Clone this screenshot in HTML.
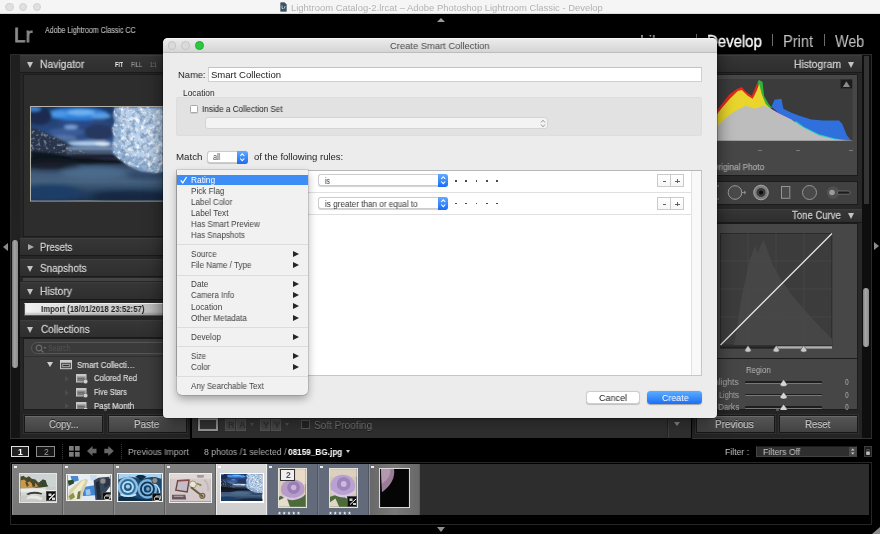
<!DOCTYPE html>
<html><head><meta charset="utf-8">
<title>Lightroom Classic - Develop</title>
<style>
*{box-sizing:border-box;margin:0;padding:0}
html,body{width:880px;height:534px;overflow:hidden;background:#000}
body{font-family:"Liberation Sans",sans-serif;position:relative;color:#ccc}
.abs{position:absolute}
.t{position:absolute;white-space:nowrap;line-height:1;will-change:transform}
#mac{position:absolute;left:0;top:0;width:880px;height:14px;background:#f5f5f5;border-bottom:1px solid #dcdcdc}
.tl{position:absolute;top:2.500px;width:8.500px;height:8.500px;border-radius:50%;background:#e0e0e0;border:0.500px solid #d2d2d2}
.ph{position:absolute;height:18px;background:linear-gradient(#363636,#2e2e2e);border-top:1px solid #3e3e3e;border-bottom:1px solid #1a1a1a}
.tri-d{position:absolute;width:0;height:0;border-left:3.500px solid transparent;border-right:3.500px solid transparent;border-top:6px solid #c4c4c4}
.tri-r{position:absolute;width:0;height:0;border-top:3.500px solid transparent;border-bottom:3.500px solid transparent;border-left:6px solid #a8a8a8}
.btn{position:absolute;height:18px;background:linear-gradient(#565656,#424242);border:1px solid #181818;box-shadow:inset 0 1px 0 #6a6a6a,0 0 0 1px #303030}
</style></head><body>
<div id="mac"><div class="tl" style="left:5.200px"></div><div class="tl" style="left:18.800px"></div><div class="tl" style="left:32.600px"></div>
<svg class="abs" style="left:280px;top:2px" width="7" height="10"><path d="M0.500 1 Q0.500 0.500 1 0.500 H4.500 L6.500 2.500 V9 Q6.500 9.500 6 9.500 H1 Q0.500 9.500 0.500 9Z" fill="#3e5062" stroke="#5a6c7e" stroke-width="0.500"/><path d="M2 3.500 V6.500 H3.500 M4.500 6.500 V4.800 Q5 4.500 5.500 4.700" stroke="#e4ecf2" stroke-width="0.700" fill="none"/></svg>
</div>
<div class="t" style="left:291.19px;top:3px;font-size:9.4px;color:#b2b2b2;transform:scaleX(1.0075);transform-origin:0 0;">Lightroom Catalog-2.lrcat – Adobe Photoshop Lightroom Classic - Develop</div>
<div class="abs" style="left:436.500px;top:17.500px;width:0;height:0;border-left:4px solid transparent;border-right:4px solid transparent;border-bottom:4px solid #9a9a9a"></div>
<div class="t" style="left:14.14px;top:24px;font-size:21px;color:#8c8c8c;transform:scaleX(0.9824);transform-origin:0 0;-webkit-text-stroke:0.800px #8c8c8c;">Lr</div>
<div class="t" style="left:44.90px;top:26px;font-size:8.6px;color:#b8b8b8;transform:scaleX(0.8209);transform-origin:0 0;-webkit-text-stroke:0.150px #b8b8b8;">Adobe Lightroom Classic CC</div>
<div class="t" style="left:639.71px;top:34px;font-size:15.6px;color:#c4c4c4;transform:scaleX(0.9851);transform-origin:0 0;">Library</div>
<div class="abs" style="left:695.500px;top:33.800px;width:1.400px;height:12.600px;background:#6c6c6c"></div>
<div class="t" style="left:706.74px;top:34px;font-size:15.6px;color:#fff;transform:scaleX(0.9589);transform-origin:0 0;-webkit-text-stroke:0.300px #fff;">Develop</div>
<div class="abs" style="left:771.800px;top:33.800px;width:1.400px;height:12.600px;background:#6c6c6c"></div>
<div class="t" style="left:783.16px;top:34px;font-size:15.6px;color:#c4c4c4;transform:scaleX(0.9387);transform-origin:0 0;">Print</div>
<div class="abs" style="left:823.500px;top:33.800px;width:1.400px;height:12.600px;background:#6c6c6c"></div>
<div class="t" style="left:835.30px;top:34px;font-size:15.6px;color:#c4c4c4;transform:scaleX(0.9194);transform-origin:0 0;">Web</div>
<div class="abs" style="left:10px;top:54px;width:10px;height:384px;background:linear-gradient(#1f1f1f 0,#222 185px,#141414 186px,#141414 100%);border-left:1px solid #2c2c2c;border-top:1px solid #2c2c2c"></div>
<div class="abs" style="left:12.300px;top:239.500px;width:6.200px;height:128.500px;background:linear-gradient(90deg,#777,#a4a4a4 40%,#8a8a8a);border-radius:3px"></div>
<div class="abs" style="left:2.500px;top:242.500px;width:0;height:0;border-top:4.500px solid transparent;border-bottom:4.500px solid transparent;border-right:5px solid #8c8c8c"></div>
<div class="abs" style="left:20px;top:54px;width:170px;height:384px;background:#262626;border-top:1px solid #2c2c2c"></div>
<div class="ph" style="left:20px;top:55px;width:168px"><div class="tri-d" style="left:7px;top:6px"></div></div><div class="t" style="left:39.54px;top:59px;font-size:10.8px;color:#cecece;transform:scaleX(0.9622);transform-origin:0 0;text-shadow:0 1px 0 rgba(0,0,0,.6);-webkit-text-stroke:0.300px #cecece;">Navigator</div>
<div class="t" style="left:114.70px;top:61px;font-size:7.4px;color:#f0f0f0;font-weight:bold;transform:scaleX(0.7364);transform-origin:0 0;">FIT</div>
<div class="t" style="left:130.50px;top:61px;font-size:7.4px;color:#8c8c8c;font-weight:bold;transform:scaleX(0.7133);transform-origin:0 0;">FILL</div>
<div class="t" style="left:149.70px;top:61px;font-size:7.4px;color:#686868;font-weight:bold;transform:scaleX(0.6273);transform-origin:0 0;">1:1</div>
<div class="abs" style="left:23px;top:74px;width:165px;height:163px;background:#2d2d2d;border:1px solid #1c1c1c"></div>
<svg class="abs" style="left:30px;top:106px" width="136" height="95.500" viewBox="0 0 136 95.500"><defs>
    <linearGradient id="sky" x1="0" y1="0" x2="0" y2="1"><stop offset="0" stop-color="#1c3763"/><stop offset="0.6" stop-color="#2d4f86"/><stop offset="1" stop-color="#41649a"/></linearGradient>
    <linearGradient id="wat" x1="0" y1="0" x2="0" y2="1"><stop offset="0" stop-color="#1b2436"/><stop offset="0.28" stop-color="#3e5878"/><stop offset="0.55" stop-color="#46627f"/><stop offset="0.8" stop-color="#27405e"/><stop offset="1" stop-color="#1a3050"/></linearGradient>
    <filter id="b1" x="-20%" y="-20%" width="140%" height="140%"><feGaussianBlur stdDeviation="1.600"/></filter>
    <filter id="b2" x="-20%" y="-20%" width="140%" height="140%"><feGaussianBlur stdDeviation="0.800"/></filter>
    <filter id="b3" x="-20%" y="-20%" width="140%" height="140%"><feGaussianBlur stdDeviation="2.600"/></filter>
    <filter id="fb"><feGaussianBlur stdDeviation="0.600"/></filter>
    <filter id="tex" x="0" y="0" width="100%" height="100%"><feTurbulence type="fractalNoise" baseFrequency="0.200" numOctaves="3" seed="7" result="n"/><feColorMatrix in="n" type="matrix" values="0 0 0 0 1  0 0 0 0 1  0 0 0 0 1  3.200 0 0 0 -1.550" result="w"/><feComposite in="w" in2="SourceGraphic" operator="in"/></filter>
    <filter id="texd" x="0" y="0" width="100%" height="100%"><feTurbulence type="fractalNoise" baseFrequency="0.220" numOctaves="3" seed="11" result="n"/><feColorMatrix in="n" type="matrix" values="0 0 0 0 0.16  0 0 0 0 0.26  0 0 0 0 0.42  0 3.400 0 0 -1.500" result="w"/><feComposite in="w" in2="SourceGraphic" operator="in"/></filter>
    <filter id="texh" x="0" y="0" width="100%" height="100%"><feTurbulence type="fractalNoise" baseFrequency="0.300" numOctaves="2" seed="5" result="n"/><feColorMatrix in="n" type="matrix" values="0 0 0 0 0.62  0 0 0 0 0.70  0 0 0 0 0.82  3 0 0 0 -1.550" result="w"/><feComposite in="w" in2="SourceGraphic" operator="in"/></filter>
    <clipPath id="navc"><rect x="1" y="1" width="134" height="93.500"/></clipPath>
  </defs><rect width="136" height="95.500" fill="#b4b2aa"/><g clip-path="url(#navc)"><g transform="translate(1,1)">
  <rect width="134" height="54" fill="url(#sky)"/>
  <g filter="url(#b1)">
    <ellipse cx="46" cy="7" rx="31" ry="6.500" fill="#2f80dc"/>
    <ellipse cx="50" cy="5.500" rx="14" ry="3" fill="#6fb2f0"/>
    <ellipse cx="28" cy="7" rx="9" ry="3" fill="#4d98e6"/>
    <ellipse cx="70" cy="9" rx="10" ry="3" fill="#5a9fe4"/>
    <ellipse cx="8" cy="9" rx="13" ry="9" fill="#1b2b4f"/>
    <ellipse cx="3" cy="2" rx="7" ry="2.500" fill="#3c7fd0"/>
    <ellipse cx="52" cy="17" rx="26" ry="4" fill="#2b4a86"/>
    <ellipse cx="68" cy="25" rx="15" ry="8" fill="#27375f"/>
    <ellipse cx="36" cy="25" rx="18" ry="4" fill="#3a5c98"/>
    <ellipse cx="40" cy="20" rx="7" ry="2" fill="#7aa4d8"/>
    <ellipse cx="58" cy="36.500" rx="22" ry="2.800" fill="#b4cdea"/>
    <ellipse cx="72" cy="37" rx="8" ry="2.500" fill="#e0ecf8"/>
    <ellipse cx="30" cy="31" rx="16" ry="3" fill="#5474a4"/>
  </g>
  <rect y="51" width="134" height="43" fill="url(#wat)"/>
  <g filter="url(#b2)">
    <path d="M0 20 L6 22 L16 27 L24 30 L32 34 L40 39 L46 42 L56 46 L70 49 L92 51 L92 55 L0 56Z" fill="#2a354b"/>
    <path d="M0 44 L20 46 L44 50 L70 52 L92 53 L92 56 L0 58Z" fill="#10151f"/>
    <path d="M36 40.500 H82 V42.500 H36Z" fill="#93a8c0"/>
    <path d="M36 42.500 H82 V47 H36Z" fill="#4c5c74" opacity="0.800"/>
    <path d="M40 47 L84 47 L90 51 L40 51Z" fill="#1a2231"/>
  </g>
  <path d="M0 20 L6 22 L16 27 L24 30 L32 34 L40 39 L46 42 L56 46 L56 48 L0 44Z" fill="#fff" filter="url(#texh)" opacity="0.550"/>
  <g filter="url(#b3)">
    <ellipse cx="20" cy="58" rx="30" ry="4.500" fill="#141a26"/>
    <ellipse cx="62" cy="66" rx="32" ry="6" fill="#4c6a8c"/>
    <ellipse cx="20" cy="86" rx="30" ry="8" fill="#1b3c66"/>
    <ellipse cx="100" cy="90" rx="40" ry="6" fill="#182840"/>
    <ellipse cx="116" cy="68" rx="20" ry="5" fill="#32486a"/>
  </g>
  <g filter="url(#b2)">
    <path d="M84 0 L82 8 L84 15 L81 22 L83 30 L81 38 L82 46 L88 52 L98 59 L110 64 L124 66 L134 64 V0Z" fill="#93b2d6"/>
    <path d="M90 2 L88 12 L92 22 L88 34 L96 46 L110 54 L134 56 V4Z" fill="#b9d0ea"/>
  </g>
  <path d="M84 0 L82 8 L84 15 L81 22 L83 30 L81 38 L82 46 L88 52 L98 59 L110 64 L124 66 L134 64 V0Z" fill="#fff" filter="url(#tex)"/>
  <path d="M84 0 L82 8 L84 15 L81 22 L83 30 L81 38 L82 46 L88 52 L98 59 L110 64 L124 66 L134 64 V0Z" fill="#fff" filter="url(#texd)" opacity="0.700"/>
  </g></g>
</svg>
<div class="ph" style="left:20px;top:238px;width:168px"><div class="tri-r" style="left:8px;top:5px"></div></div><div class="t" style="left:39.62px;top:242px;font-size:10.8px;color:#cecece;transform:scaleX(0.8800);transform-origin:0 0;text-shadow:0 1px 0 rgba(0,0,0,.6);-webkit-text-stroke:0.300px #cecece;">Presets</div>
<div class="ph" style="left:20px;top:259px;width:168px"><div class="tri-d" style="left:7px;top:6px"></div></div><div class="t" style="left:39.58px;top:263px;font-size:10.8px;color:#cecece;transform:scaleX(0.9160);transform-origin:0 0;text-shadow:0 1px 0 rgba(0,0,0,.6);-webkit-text-stroke:0.300px #cecece;">Snapshots</div>
<div class="abs" style="left:23px;top:277.500px;width:165px;height:3px;background:#444"></div>
<div class="ph" style="left:20px;top:282px;width:168px"><div class="tri-d" style="left:7px;top:6px"></div></div><div class="t" style="left:39.55px;top:286px;font-size:10.8px;color:#cecece;transform:scaleX(0.9485);transform-origin:0 0;text-shadow:0 1px 0 rgba(0,0,0,.6);-webkit-text-stroke:0.300px #cecece;">History</div>
<div class="abs" style="left:24px;top:302.500px;width:164px;height:13px;background:linear-gradient(90deg,#f2f2f2,#dcdcdc 25%,#c8c8c8 70%,#9a9a9a);border:1px solid #555;border-top-color:#eee;box-shadow:inset 0 -2px 2px rgba(0,0,0,.18)"></div>
<div class="t" style="left:41.30px;top:305px;font-size:8.6px;color:#222;font-weight:bold;transform:scaleX(0.9018);transform-origin:0 0;">Import (18/01/2018 23:52:57)</div>
<div class="ph" style="left:20px;top:320px;width:168px"><div class="tri-d" style="left:7px;top:6px"></div></div><div class="t" style="left:40.50px;top:324px;font-size:10.8px;color:#cecece;transform:scaleX(0.9208);transform-origin:0 0;text-shadow:0 1px 0 rgba(0,0,0,.6);-webkit-text-stroke:0.300px #cecece;">Collections</div>
<div class="abs" style="left:23px;top:337.500px;width:165px;height:72.500px;background:#3d3d3d;border:1px solid #1c1c1c"></div>
<div class="abs" style="left:31px;top:342px;width:152px;height:12px;border-radius:6px;background:#3a3a3a;border:1px solid #555"></div>
<svg class="abs" style="left:35px;top:343.500px" width="12" height="9"><circle cx="4" cy="4" r="2.800" fill="none" stroke="#6c6c6c" stroke-width="1.200"/><path d="M6 6 L8.500 8.500" stroke="#6c6c6c" stroke-width="1.200"/><path d="M8.500 3 L11.500 3 L10 5Z" fill="#6c6c6c"/></svg>
<div class="t" style="left:47.88px;top:344px;font-size:8.6px;color:#555;transform:scaleX(0.8192);transform-origin:0 0;">Search</div>
<div class="abs" style="left:24px;top:356px;width:163px;height:1px;background:#303030"></div>
<div class="tri-d" style="left:46.500px;top:361.500px;border-left-width:3px;border-right-width:3px;border-top-width:5.500px;border-top-color:#d0d0d0"></div>
<svg class="abs" style="left:59.500px;top:359.800px" width="13" height="10"><rect x="0.500" y="0.500" width="11" height="8.200" fill="#555" stroke="#c8c8c8"/><rect x="0.500" y="0.500" width="11" height="2.200" fill="#d0d0d0"/><rect x="2.800" y="4.500" width="6.400" height="2.200" fill="#2e2e2e" stroke="#d8d8d8" stroke-width="0.600"/></svg>
<div class="t" style="left:76.79px;top:361px;font-size:8.8px;color:#dcdcdc;transform:scaleX(0.9113);transform-origin:0 0;-webkit-text-stroke:0.200px #dcdcdc;">Smart Collecti…</div>
<svg class="abs" style="left:76px;top:373.5px" width="13" height="11"><rect x="0.500" y="0.500" width="9.500" height="7.500" fill="#8a8a8a" stroke="#c8c8c8"/><rect x="0.500" y="0.500" width="9.500" height="2" fill="#c8c8c8"/><path d="M2 4.500 H8 M2 6 H8" stroke="#555" stroke-width="0.600"/><circle cx="9.500" cy="7.500" r="2.300" fill="#d0d0d0" stroke="#444" stroke-width="0.500"/></svg>
<div class="t" style="left:94.30px;top:374px;font-size:8.8px;color:#dcdcdc;transform:scaleX(0.8714);transform-origin:0 0;-webkit-text-stroke:0.200px #dcdcdc;">Colored Red</div>
<div class="abs" style="left:65px;top:375.5px;width:0;height:0;border-top:3px solid transparent;border-bottom:3px solid transparent;border-left:4.500px solid #4c4c4c"></div>
<svg class="abs" style="left:76px;top:387.5px" width="13" height="11"><rect x="0.500" y="0.500" width="9.500" height="7.500" fill="#8a8a8a" stroke="#c8c8c8"/><rect x="0.500" y="0.500" width="9.500" height="2" fill="#c8c8c8"/><path d="M2 4.500 H8 M2 6 H8" stroke="#555" stroke-width="0.600"/><circle cx="9.500" cy="7.500" r="2.300" fill="#d0d0d0" stroke="#444" stroke-width="0.500"/></svg>
<div class="t" style="left:93.67px;top:388px;font-size:8.8px;color:#dcdcdc;transform:scaleX(0.8282);transform-origin:0 0;-webkit-text-stroke:0.200px #dcdcdc;">Five Stars</div>
<div class="abs" style="left:65px;top:389.5px;width:0;height:0;border-top:3px solid transparent;border-bottom:3px solid transparent;border-left:4.500px solid #4c4c4c"></div>
<svg class="abs" style="left:76px;top:401.5px" width="13" height="7.5"><rect x="0.500" y="0.500" width="9.500" height="7.500" fill="#8a8a8a" stroke="#c8c8c8"/><rect x="0.500" y="0.500" width="9.500" height="2" fill="#c8c8c8"/><path d="M2 4.500 H8 M2 6 H8" stroke="#555" stroke-width="0.600"/><circle cx="9.500" cy="7.500" r="2.300" fill="#d0d0d0" stroke="#444" stroke-width="0.500"/></svg>
<div class="t" style="left:93.60px;top:402px;font-size:8.8px;color:#dcdcdc;transform:scaleX(0.9047);transform-origin:0 0;height:8.200px;overflow:hidden;-webkit-text-stroke:0.200px #dcdcdc;">Past Month</div>
<div class="abs" style="left:65px;top:403px;width:0;height:0;border-top:3px solid transparent;border-bottom:3px solid transparent;border-left:4.500px solid #4c4c4c"></div>
<div class="abs" style="left:20px;top:410px;width:170px;height:28px;background:#242424"></div>
<div class="abs" style="left:10px;top:438px;width:180px;height:1px;background:#333"></div>
<div class="abs" style="left:104px;top:409px;width:3px;height:2px;background:#555"></div>
<div class="btn" style="left:24px;top:415px;width:79px"></div>
<div class="btn" style="left:107.500px;top:415px;width:79px"></div>
<div class="t" style="left:48.90px;top:418px;font-size:11.6px;color:#c6c6c6;transform:scaleX(0.8229);transform-origin:0 0;text-shadow:0 -1px 0 rgba(0,0,0,.7);-webkit-text-stroke:0.200px #c6c6c6;">Copy...</div>
<div class="t" style="left:134.05px;top:418px;font-size:11.6px;color:#c6c6c6;transform:scaleX(0.8500);transform-origin:0 0;text-shadow:0 -1px 0 rgba(0,0,0,.7);-webkit-text-stroke:0.200px #c6c6c6;">Paste</div>
<div class="abs" style="left:191.500px;top:410px;width:499px;height:28px;background:linear-gradient(#3c3c3c,#3a3a3a 40%,#2e2e2e);border-top:1px solid #454545"></div>
<div class="abs" style="left:198px;top:417.500px;width:19.500px;height:13.500px;border:2px solid #a4a4a4;background:#3a3a3a;box-shadow:0 0 0 0.500px #222"></div>
<div class="abs" style="left:224.5px;top:418.500px;width:10.500px;height:12px;background:#4e4e4e;border:0.500px solid #5a5a5a"></div>
<div class="t" style="left:227.60px;top:420px;font-size:9.4px;color:#363636;font-weight:bold;">R</div>
<div class="abs" style="left:235.5px;top:418.500px;width:10.500px;height:12px;background:#4e4e4e;border:0.500px solid #5a5a5a"></div>
<div class="t" style="left:238.60px;top:420px;font-size:9.4px;color:#363636;font-weight:bold;">A</div>
<div class="abs" style="left:259.8px;top:418.500px;width:10.500px;height:12px;background:#4e4e4e;border:0.500px solid #5a5a5a"></div>
<div class="t" style="left:262.90px;top:420px;font-size:9.4px;color:#363636;font-weight:bold;">Y</div>
<div class="abs" style="left:270.8px;top:418.500px;width:10.500px;height:12px;background:#4e4e4e;border:0.500px solid #5a5a5a"></div>
<div class="t" style="left:273.90px;top:420px;font-size:9.4px;color:#363636;font-weight:bold;">Y</div>
<div class="abs" style="left:250.2px;top:423px;width:0;height:0;border-left:2.500px solid transparent;border-right:2.500px solid transparent;border-top:3px solid #5c5c5c"></div>
<div class="abs" style="left:285.3px;top:423px;width:0;height:0;border-left:2.500px solid transparent;border-right:2.500px solid transparent;border-top:3px solid #5c5c5c"></div>
<div class="abs" style="left:301px;top:420.400px;width:8.500px;height:8.500px;border:1px solid #5c5c5c;background:#2a2a2a"></div>
<div class="t" style="left:314.19px;top:420px;font-size:11px;color:#858585;transform:scaleX(0.9129);transform-origin:0 0;text-shadow:0 1px 0 rgba(0,0,0,.5);">Soft Proofing</div>
<div class="abs" style="left:666.500px;top:411px;width:1px;height:27px;background:#262626"></div><div class="abs" style="left:667.500px;top:411px;width:1px;height:27px;background:#444"></div>
<div class="abs" style="left:673.500px;top:422px;width:0;height:0;border-left:3.500px solid transparent;border-right:3.500px solid transparent;border-top:4px solid #9a9a9a"></div>
<div class="abs" style="left:692px;top:54px;width:170px;height:384px;background:#282828;border-top:1px solid #2c2c2c"></div>
<div class="abs" style="left:861.500px;top:54px;width:10px;height:384px;background:#0e0e0e;border-right:1px solid #2c2c2c;border-top:1px solid #2c2c2c"></div>
<div class="abs" style="left:863.500px;top:56px;width:5.500px;height:147.500px;background:#343434"></div>
<div class="abs" style="left:863px;top:288px;width:5.800px;height:59px;background:linear-gradient(90deg,#7c7c7c,#a8a8a8 40%,#8c8c8c);border-radius:3px"></div>
<div class="abs" style="left:874px;top:242px;width:0;height:0;border-top:4.700px solid transparent;border-bottom:4.700px solid transparent;border-left:5px solid #8c8c8c"></div>
<div class="ph" style="left:692px;top:55px;width:169.500px;height:18px"><div class="tri-d" style="left:156px;top:6px"></div></div><div class="t" style="left:794.45px;top:59px;font-size:10.8px;color:#cecece;transform:scaleX(0.9542);transform-origin:0 0;text-shadow:0 1px 0 rgba(0,0,0,.6);-webkit-text-stroke:0.300px #cecece;">Histogram</div>
<div class="abs" style="left:693px;top:73.500px;width:165px;height:102px;background:#474747;border:1px solid #1c1c1c"></div>
<svg class="abs" style="left:716px;top:79px" width="136.500" height="62" viewBox="716 79 136.500 62">
  <rect x="716" y="79" width="136.500" height="62" fill="#3b3b3b"/>
  <path d="M716 111.700 L722 103.700 L729 94.800 L736.800 88.900 L741.800 86.900 L745 91 L751.700 95.800 L754.700 88.900 L758 81 L760 84 L762 96 L770 108 L716 130Z" fill="#dc2a20"/>
  <path d="M758 81 L759.200 80 L762.600 82 L764 95.800 L768.500 103.800 L772 108 L760 108Z" fill="#2eb43a"/>
  <path d="M716 115.700 L722 107.700 L729.900 98.800 L737.800 90.900 L741.800 89.900 L747.700 95.800 L752.700 98.800 L756.600 90.900 L759.200 83.900 L761.600 93.800 L765.600 103.800 L769.500 107.700 L780 116 L716 132Z" fill="#e9d52b"/>
  <path d="M770 106 L774 110.500 L782 114 L790 117 L796 120 L790 120 L776 113Z" fill="#d628c8"/>
  <path d="M771.500 106.700 L774.500 99.800 L781.400 98.800 L783.400 108.700 L791.400 112.700 L799.300 115.700 L811.200 119.600 L823.100 120.600 L839 120.600 L842 123.600 L847 135.500 L851 140.500 L835 139.500 L819 135.500 L803.300 127.600 L791.400 119.600 L780 114Z" fill="#3070dc"/>
  <path d="M796 121 L803.300 126.400 L819 134.300 L835 138.600 L848 140.200 L835 140 L819 136.300 L803.300 128.400 L795 122.500Z" fill="#24d0cc"/>
  <path d="M716 127.600 L724 119.600 L733.800 111.700 L745.700 105.700 L754.700 108.700 L763.600 105.700 L769.500 107.700 L777.500 112.700 L791.400 119.600 L803.300 127.600 L819 135.500 L835 139.500 L851 141 L716 141Z" fill="#bdbdbd"/>
  <rect x="716" y="140.400" width="136.500" height="0.600" fill="#8a8a8a"/>
  <rect x="840.600" y="79.600" width="11.500" height="8.800" fill="#1c1c1c"/><path d="M842.800 87 L846.400 81.200 L850 87Z" fill="#8c8c8c"/>
</svg>
<div class="t" style="left:711.70px;top:163px;font-size:8.6px;color:#a4a4a4;transform:scaleX(0.9574);transform-origin:0 0;-webkit-text-stroke:0.250px #a4a4a4;">Original Photo</div>
<div class="abs" style="left:758px;top:149.500px;width:4px;height:1px;background:#7a7a7a"></div>
<div class="abs" style="left:795.5px;top:149.500px;width:4px;height:1px;background:#7a7a7a"></div>
<div class="abs" style="left:848.5px;top:149.500px;width:4px;height:1px;background:#7a7a7a"></div>
<div class="abs" style="left:693px;top:180.500px;width:165px;height:24px;background:#414141;border:1px solid #1c1c1c"></div>
<svg class="abs" style="left:716px;top:181px" width="140" height="23" viewBox="0 0 140 23">
  <path d="M3 5 H0.500 V18 H3" fill="none" stroke="#9a9a9a"/>
  <circle cx="19" cy="11.500" r="6.800" fill="#4a4a4a" stroke="#9a9a9a" stroke-width="1"/><path d="M25.800 11.500 L29.500 11.500 M28 10 L30 11.500 L28 13" stroke="#9a9a9a" fill="none" stroke-width="0.800"/>
  <circle cx="45" cy="11.500" r="7.300" fill="#7c7c7c" stroke="#a8a8a8"/><circle cx="45" cy="11.500" r="4.500" fill="#3a3a3a"/><circle cx="45" cy="11.500" r="2" fill="#0c0c0c"/>
  <rect x="65.500" y="5.500" width="8.300" height="11.800" fill="#4a4a4a" stroke="#959595"/>
  <circle cx="93.500" cy="11.500" r="7" fill="#4a4a4a" stroke="#959595"/>
  <circle cx="117" cy="11.500" r="6.300" fill="#505050"/><circle cx="116" cy="11.500" r="2.800" fill="#9a9a9a"/><rect x="121.500" y="10" width="12.500" height="3.200" rx="1" fill="#1c1c1c" stroke="#767676" stroke-width="0.800"/>
</svg>
<div class="ph" style="left:692px;top:209px;width:169.500px;height:13.5px"><div class="tri-d" style="left:156px;top:2.8px"></div></div><div class="t" style="left:791.70px;top:210px;font-size:10.8px;color:#cecece;transform:scaleX(0.8836);transform-origin:0 0;text-shadow:0 1px 0 rgba(0,0,0,.6);-webkit-text-stroke:0.300px #cecece;">Tone Curve</div>
<div class="abs" style="left:693px;top:223px;width:165px;height:136px;background:#474747;border:1px solid #1c1c1c"></div>
<svg class="abs" style="left:720px;top:233px" width="113" height="121" viewBox="0 0 113 121">
  <rect x="0.500" y="0.500" width="111.300" height="111.700" fill="#3c3c3c" stroke="#2a2a2a"/>
  <path d="M14 112 L22 62 L30 26 L35 13 L38 20 L40 14 L43.700 6.800 L47 16 L52 30 L58.600 43 L71.700 62 L92.600 86 L112 106 V112Z" fill="#464646"/>
  <path d="M56 0 V112 M28 0 V112 M84 0 V112 M0 56 H112 M0 28 H112 M0 84 H112" stroke="#4a4a4a" stroke-width="0.600"/>
  <path d="M0.500 112 L112 0.500" stroke="#e6e6e6" stroke-width="1.300"/>
  <rect x="0" y="113.300" width="56" height="2.300" fill="#222"/><rect x="56" y="113.300" width="56" height="2.300" fill="#b0b0b0"/>
  <g fill="#c8c8c8" stroke="#3a3a3a" stroke-width="0.500"><path d="M24.800 117 L28 112.500 L31.200 117 A3.200 2.200 0 0 1 24.800 117Z"/><path d="M53 117 L56.200 112.500 L59.400 117 A3.200 2.200 0 0 1 53 117Z"/><path d="M80.500 117 L83.700 112.500 L86.900 117 A3.200 2.200 0 0 1 80.500 117Z"/></g>
</svg>
<div class="abs" style="left:693px;top:358px;width:165px;height:52px;background:#464646;border:1px solid #1c1c1c"></div>
<div class="t" style="left:745.60px;top:366px;font-size:8.6px;color:#b8b8b8;transform:scaleX(0.9038);transform-origin:0 0;">Region</div>
<div class="t" style="left:700.81px;top:378px;font-size:8.6px;color:#a8a8a8;transform:scaleX(0.9946);transform-origin:0 0;">Highlights</div>
<div class="t" style="left:719.05px;top:391px;font-size:8.6px;color:#a8a8a8;transform:scaleX(0.8500);transform-origin:0 0;">Lights</div>
<div class="t" style="left:717.86px;top:403px;font-size:8.6px;color:#a8a8a8;transform:scaleX(0.9429);transform-origin:0 0;height:7.500px;overflow:hidden;">Darks</div>
<div class="abs" style="left:744.800px;top:381px;width:77.500px;height:2.800px;background:#1e1e1e;border-bottom:1px solid #787878;border-radius:1px"></div>
<div class="abs" style="left:744.800px;top:393.5px;width:77.500px;height:2.800px;background:#1e1e1e;border-bottom:1px solid #787878;border-radius:1px"></div>
<div class="abs" style="left:744.800px;top:406px;width:77.500px;height:2.800px;background:#1e1e1e;border-bottom:1px solid #787878;border-radius:1px"></div>
<svg class="abs" style="left:779.200px;top:377.500px" width="10" height="32"><g fill="#d4d4d4" stroke="#2a2a2a" stroke-width="0.500"><path d="M1 6.300 L4.600 1.500 L8.200 6.300 A3.600 2.300 0 0 1 1 6.300Z"/><path d="M1 18.800 L4.600 14 L8.200 18.800 A3.600 2.300 0 0 1 1 18.800Z"/><path d="M1 31 L4.600 26.200 L8.200 31 A3.600 2.300 0 0 1 1 31Z"/></g></svg>
<div class="t" style="left:845.20px;top:378px;font-size:8.6px;color:#a8a8a8;transform:scaleX(0.7800);transform-origin:0 0;">0</div>
<div class="t" style="left:845.20px;top:391px;font-size:8.6px;color:#a8a8a8;transform:scaleX(0.7800);transform-origin:0 0;">0</div>
<div class="t" style="left:845.20px;top:403px;font-size:8.6px;color:#a8a8a8;transform:scaleX(0.7800);transform-origin:0 0;height:7.500px;overflow:hidden;">0</div>
<div class="abs" style="left:692px;top:410px;width:170px;height:28px;background:#242424"></div>
<div class="abs" style="left:692px;top:438px;width:180px;height:1px;background:#333"></div>
<div class="abs" style="left:775.500px;top:409px;width:3px;height:2px;background:#555"></div>
<div class="btn" style="left:695.500px;top:415px;width:79px"></div>
<div class="btn" style="left:779px;top:415px;width:78.500px"></div>
<div class="t" style="left:714.84px;top:418px;font-size:11.6px;color:#c6c6c6;transform:scaleX(0.8591);transform-origin:0 0;text-shadow:0 -1px 0 rgba(0,0,0,.7);-webkit-text-stroke:0.200px #c6c6c6;">Previous</div>
<div class="t" style="left:805.36px;top:418px;font-size:11.6px;color:#c6c6c6;transform:scaleX(0.8379);transform-origin:0 0;text-shadow:0 -1px 0 rgba(0,0,0,.7);-webkit-text-stroke:0.200px #c6c6c6;">Reset</div>
<div class="abs" style="left:10.500px;top:445.500px;width:18.500px;height:11.500px;border:1.500px solid #e0e0e0;background:#222"></div>
<div class="t" style="left:18.10px;top:448px;font-size:8.6px;color:#fff;font-weight:bold;">1</div>
<div class="abs" style="left:36px;top:445.500px;width:18.500px;height:11.500px;border:1.500px solid #8c8c8c;background:#161616"></div>
<div class="t" style="left:43.50px;top:448px;font-size:8.6px;color:#9a9a9a;">2</div>
<div class="abs" style="left:61.500px;top:444px;width:0;height:15px;border-left:1px dotted #3a3a3a"></div>
<svg class="abs" style="left:68.800px;top:445.500px" width="11" height="11"><g fill="#7c7c7c"><rect width="4.700" height="4.700"/><rect x="6" width="4.700" height="4.700"/><rect y="6" width="4.700" height="4.700"/><rect x="6" y="6" width="4.700" height="4.700"/></g></svg>
<svg class="abs" style="left:86.500px;top:446px" width="28" height="11"><g fill="#666"><path d="M0 5 L5.500 0 V2.800 H9.500 V7.200 H5.500 V10Z"/><path d="M26.800 5 L21.300 0 V2.800 H17.300 V7.200 H21.300 V10Z"/></g></svg>
<div class="abs" style="left:120.500px;top:444px;width:0;height:15px;border-left:1px dotted #3a3a3a"></div>
<div class="t" style="left:127.71px;top:448px;font-size:8.8px;color:#b0b0b0;transform:scaleX(0.9852);transform-origin:0 0;">Previous Import</div>
<div class="t" style="left:204.00px;top:448px;font-size:8.8px;color:#b0b0b0;transform:scaleX(0.9857);transform-origin:0 0;">8 photos /1 selected /</div>
<div class="t" style="left:287.70px;top:448px;font-size:8.8px;color:#fff;font-weight:bold;transform:scaleX(0.9328);transform-origin:0 0;">08159_BG.jpg</div>
<div class="abs" style="left:346px;top:450px;width:0;height:0;border-left:2.500px solid transparent;border-right:2.500px solid transparent;border-top:3px solid #ccc"></div>
<div class="t" style="left:725.42px;top:448px;font-size:8.8px;color:#c4c4c4;transform:scaleX(0.9826);transform-origin:0 0;">Filter :</div>
<div class="abs" style="left:756px;top:445.500px;width:101px;height:11px;background:#2e2e2e;border:1px solid #444;border-top-color:#1c1c1c"></div>
<div class="t" style="left:763.22px;top:448px;font-size:8.8px;color:#c8c8c8;transform:scaleX(0.9811);transform-origin:0 0;">Filters Off</div>
<svg class="abs" style="left:848.500px;top:446.500px" width="7.500" height="9"><rect width="7.500" height="9" fill="#4a4a4a"/><path d="M2 3.500 L3.750 1.500 L5.500 3.500Z M2 5.500 L3.750 7.500 L5.500 5.500Z" fill="#d0d0d0"/></svg>
<svg class="abs" style="left:863.500px;top:445.500px" width="8" height="11"><rect x="0.500" y="0.500" width="7" height="10" fill="#1e1e1e" stroke="#3c3c3c"/><rect x="2.200" y="5.500" width="3.600" height="3.400" fill="#c0c0c0"/><path d="M2.800 5.500 V3.500 H5.200 V5.500" fill="none" stroke="#6c6c6c" stroke-width="0.700"/></svg>
<style>
.cell{position:absolute;top:463.500px;height:51px;width:50px;background:linear-gradient(#808080,#767676);border-left:1px solid #8e8e8e;border-right:1px solid #5c5c5c}
.flag{position:absolute;left:0.500px;top:2.200px;width:3.200px;height:2.200px;background:#ececec}
.th{position:absolute;border:1px solid #e6e2d8;overflow:hidden}
.bdg{position:absolute;width:9.500px;height:9.500px;background:#0c0c0c;border:0.500px solid #4c4c4c}
.stars{position:absolute;top:509.800px;font-size:5.200px;color:#f0f0f0;letter-spacing:2.500px;line-height:5px}
</style>
<div class="abs" style="left:10px;top:461.500px;width:861.500px;height:63px;border:1px solid #262626"></div>
<div class="abs" style="left:12px;top:463.500px;width:857px;height:51px;background:#2d2d2d"></div>
<div class="cell" style="left:12px;width:51px"><div class="flag"></div></div>
<div class="cell" style="left:63px;width:51px"><div class="flag"></div></div>
<div class="cell" style="left:114px;width:51px"><div class="flag"></div></div>
<div class="cell" style="left:165px;width:51px"><div class="flag"></div></div>
<div class="cell" style="left:216px;width:51px;background:linear-gradient(#d8d8d8,#cecece);border-color:#ececec"><div class="flag" style="background:#fff"></div></div>
<div class="cell" style="left:267px;width:51px;background:#636b7b;border-left-color:#737b8b;border-right-color:#4e5666"><div class="flag"></div></div>
<div class="cell" style="left:318px;width:51px;background:#636b7b;border-left-color:#737b8b;border-right-color:#4e5666"><div class="flag"></div></div>
<div class="cell" style="left:369px;width:51px;background:linear-gradient(90deg,#686868,#7a7a7a 50%,#686868)"><div class="flag"></div></div>

<svg class="th" style="left:18.800px;top:473px;border-color:#e4e4e0" width="38.500" height="30" viewBox="0 0 38 30">
<rect width="38" height="30" fill="#d4d6d2"/><rect width="38" height="14" fill="#cdd3d3"/><g filter="url(#fb)">
<path d="M0 3 L3 2 L6 4 L9 2.500 L12 5 L16 6 L19 9 L22 8 L24 6 L27 7 L28 11 L30 13 L22 14.500 L0 15.500Z" fill="#4a4a2c"/>
<path d="M0 7 L4 6 L7 9 L10 8 L13 11 L16 10 L19 13 L14 15 L0 15.500Z" fill="#c8984e"/>
<path d="M5 9 L7 8 L9 12 L7 14Z" fill="#5a4a28"/><path d="M12 9 L15 9 L16 13 L13 14Z" fill="#4a4226"/>
<path d="M21 8 L24 6 L27 7 L28 11 L29 13 L22 14Z" fill="#36442e"/>
<path d="M0 15.500 H38 V19.500 H0Z" fill="#eaeae6"/>
<path d="M27 14 H38 V17 H27Z" fill="#c4cccc"/>
<path d="M6 21.500 Q13 17 23 20.500 Q24 21.500 22 22 Q14 20 8 22.500Z" fill="#3a3c38"/>
<path d="M0 23 H38 V30 H0Z" fill="#c9c9c6"/><path d="M8 24 Q16 21 24 26 L22 28 Q14 25 6 27Z" fill="#e6e6e4"/></g></svg>
<div class="bdg" style="left:46.300px;top:491.400px"><svg width="9.500" height="9.500" style="position:absolute;left:0;top:0"><path d="M2 7.500 L7.500 2" stroke="#fff" stroke-width="1.100"/><rect x="1.500" y="1.500" width="3" height="2.500" fill="#d8d8d8"/><rect x="5" y="5.500" width="3" height="2.500" fill="#d8d8d8"/></svg></div>
<svg class="th" style="left:65.800px;top:474.200px;border-color:#f0f0ec" width="46" height="27" viewBox="0 0 46 27">
<rect width="46" height="27" fill="#e8eef6"/><g filter="url(#fb)">
<path d="M3 1 L11 1 L12 6 L5 8Z" fill="#4a8ad2"/><path d="M24 0 L32 0 L30 5 L25 6Z" fill="#c8dcf0"/>
<path d="M17 13 L29 11 L30 25 L16 25Z" fill="#3f86d4"/><path d="M19 16 L24 15 L25 21 L20 22Z" fill="#9cc4ec"/><path d="M13 23 L30 22 L30 27 L13 27Z" fill="#dfe9f5"/>
<path d="M0 6 L6 5 L7 9 L1 12Z" fill="#2e4a2c"/>
<path d="M0 25 L2 16 L14 6 L20 4 L22 6 L14 26 L0 27Z" fill="#d9d2a8"/><path d="M4 20 L16 6 L19 6 L9 26 L4 26Z" fill="#f0ecd2"/><path d="M1 23 L6 19 L8 24 L3 27Z" fill="#8a9450"/><path d="M11 18 L14 17 L13 26 L10 26Z" fill="#6a7a4a"/>
<path d="M28 6 L33 3 L45 2 L46 12 L40 20 L38 27 L30 27Z" fill="#39475a"/><path d="M30 8 L34 6 L36 26 L32 26Z" fill="#1e2a3a"/><path d="M38 4 L46 4 L46 10 L40 14Z" fill="#2a3646"/></g>
<circle cx="38" cy="6.500" r="3.200" fill="#8e8e8e" stroke="#4a4a4a" stroke-width="0.700"/></svg>
<div class="bdg" style="left:102.200px;top:491.600px;width:8.500px;height:8.500px"><svg width="9" height="9" style="position:absolute;left:0;top:0"><rect x="1.500" y="3" width="5" height="3.500" rx="1.200" fill="none" stroke="#e4e4e4" stroke-width="0.900"/><path d="M3 3 V2 H7.300 V5" stroke="#e4e4e4" stroke-width="0.800" fill="none"/></svg></div>
<svg class="th" style="left:116.800px;top:473px;border-color:#eef4f8" width="46" height="29" viewBox="0 0 46 29">
<rect width="46" height="29" fill="#1a4a72"/><g filter="url(#fb)">
<path d="M0 0 H46 V5 Q34 1 24 6 Q12 0 0 6Z" fill="#a8d2ee"/>
<path d="M18 3 L24 7 L30 3 L26 1 L21 1Z" fill="#0c2c48"/>
<circle cx="10" cy="14" r="11" fill="#8fc2e6"/><circle cx="10" cy="14" r="8.500" fill="#2f6c9c"/><circle cx="10" cy="14" r="6.500" fill="#b6dcf4"/><circle cx="10" cy="14" r="4.200" fill="#22587f"/><circle cx="10" cy="13.500" r="2.300" fill="#a4d0ee"/>
<circle cx="31" cy="16" r="10.500" fill="#7fb4dc"/><circle cx="31" cy="16" r="8" fill="#0f3656"/><circle cx="31" cy="16" r="6" fill="#8cc0e6"/><circle cx="31" cy="16" r="4" fill="#153f62"/><circle cx="31.500" cy="16" r="2" fill="#6fa8d4"/>
<path d="M0 25 Q10 22 20 26 Q30 29 46 24 V29 H0Z" fill="#0d2d49"/><path d="M2 22 Q10 26 19 22" stroke="#cde6f8" stroke-width="1.600" fill="none"/><path d="M38 10 Q45 14 44 22" stroke="#bfe0f6" stroke-width="1.500" fill="none"/></g>
<circle cx="39" cy="7" r="3.300" fill="#8e8e8e" stroke="#2a2a2a" stroke-width="0.800"/></svg>
<div class="bdg" style="left:152.300px;top:492.500px;width:9px;height:8.500px"><svg width="9" height="9" style="position:absolute;left:0;top:0"><rect x="1.500" y="3" width="5" height="3.500" rx="1.200" fill="none" stroke="#e4e4e4" stroke-width="0.900"/><path d="M3 3 V2 H7.300 V5" stroke="#e4e4e4" stroke-width="0.800" fill="none"/></svg></div>
<svg class="th" style="left:169.200px;top:473px;border-color:#f0ecea" width="43" height="29.500" viewBox="0 0 43 29">
<rect width="43" height="29" fill="#d4cacc"/><g filter="url(#fb)">
<path d="M0 0 H43 V5 H0Z" fill="#dfd8d6"/><path d="M28 1 L36 1 L35 4 L29 4Z" fill="#a89a94"/>
<path d="M8 7 L20 6.500 L18 19 L6 17Z" fill="#c4bcc8" stroke="#6a4a44" stroke-width="1.500"/>
<path d="M8 7 L20 6.500" stroke="#8a4a4a" stroke-width="1.600"/>
<circle cx="24" cy="11" r="3.600" fill="#ece6d2" stroke="#8a8260" stroke-width="0.800"/>
<path d="M22 14 L35 24" stroke="#6a5a3c" stroke-width="2.200"/><path d="M28 10 L33 12" stroke="#8a8a3c" stroke-width="1.800"/>
<circle cx="34" cy="23" r="2.600" fill="none" stroke="#7a6a44" stroke-width="1.400"/>
<path d="M2 22 L16 22 L17 27 L2 27Z" fill="#6a5660"/><path d="M4 23.500 H14" stroke="#d4cacc" stroke-width="0.800"/>
<path d="M36 6 Q41 10 40 18" stroke="#c4b8b4" stroke-width="2" fill="none"/></g></svg>
<div class="abs" style="left:219.500px;top:472.500px;width:44.500px;height:30px;background:#fff"></div>
<svg class="abs" style="left:221px;top:474px" width="41.500" height="27" viewBox="1 1 134 93.500" preserveAspectRatio="none"><g clip-path="url(#navc)"><g transform="translate(1,1)">
  <rect width="134" height="54" fill="url(#sky)"/>
  <g filter="url(#b1)">
    <ellipse cx="46" cy="7" rx="31" ry="6.500" fill="#2f80dc"/>
    <ellipse cx="50" cy="5.500" rx="14" ry="3" fill="#6fb2f0"/>
    <ellipse cx="28" cy="7" rx="9" ry="3" fill="#4d98e6"/>
    <ellipse cx="70" cy="9" rx="10" ry="3" fill="#5a9fe4"/>
    <ellipse cx="8" cy="9" rx="13" ry="9" fill="#1b2b4f"/>
    <ellipse cx="3" cy="2" rx="7" ry="2.500" fill="#3c7fd0"/>
    <ellipse cx="52" cy="17" rx="26" ry="4" fill="#2b4a86"/>
    <ellipse cx="68" cy="25" rx="15" ry="8" fill="#27375f"/>
    <ellipse cx="36" cy="25" rx="18" ry="4" fill="#3a5c98"/>
    <ellipse cx="40" cy="20" rx="7" ry="2" fill="#7aa4d8"/>
    <ellipse cx="58" cy="36.500" rx="22" ry="2.800" fill="#b4cdea"/>
    <ellipse cx="72" cy="37" rx="8" ry="2.500" fill="#e0ecf8"/>
    <ellipse cx="30" cy="31" rx="16" ry="3" fill="#5474a4"/>
  </g>
  <rect y="51" width="134" height="43" fill="url(#wat)"/>
  <g filter="url(#b2)">
    <path d="M0 20 L6 22 L16 27 L24 30 L32 34 L40 39 L46 42 L56 46 L70 49 L92 51 L92 55 L0 56Z" fill="#2a354b"/>
    <path d="M0 44 L20 46 L44 50 L70 52 L92 53 L92 56 L0 58Z" fill="#10151f"/>
    <path d="M36 40.500 H82 V42.500 H36Z" fill="#93a8c0"/>
    <path d="M36 42.500 H82 V47 H36Z" fill="#4c5c74" opacity="0.800"/>
    <path d="M40 47 L84 47 L90 51 L40 51Z" fill="#1a2231"/>
  </g>
  <path d="M0 20 L6 22 L16 27 L24 30 L32 34 L40 39 L46 42 L56 46 L56 48 L0 44Z" fill="#fff" filter="url(#texh)" opacity="0.550"/>
  <g filter="url(#b3)">
    <ellipse cx="20" cy="58" rx="30" ry="4.500" fill="#141a26"/>
    <ellipse cx="62" cy="66" rx="32" ry="6" fill="#4c6a8c"/>
    <ellipse cx="20" cy="86" rx="30" ry="8" fill="#1b3c66"/>
    <ellipse cx="100" cy="90" rx="40" ry="6" fill="#182840"/>
    <ellipse cx="116" cy="68" rx="20" ry="5" fill="#32486a"/>
  </g>
  <g filter="url(#b2)">
    <path d="M84 0 L82 8 L84 15 L81 22 L83 30 L81 38 L82 46 L88 52 L98 59 L110 64 L124 66 L134 64 V0Z" fill="#93b2d6"/>
    <path d="M90 2 L88 12 L92 22 L88 34 L96 46 L110 54 L134 56 V4Z" fill="#b9d0ea"/>
  </g>
  <path d="M84 0 L82 8 L84 15 L81 22 L83 30 L81 38 L82 46 L88 52 L98 59 L110 64 L124 66 L134 64 V0Z" fill="#fff" filter="url(#tex)"/>
  <path d="M84 0 L82 8 L84 15 L81 22 L83 30 L81 38 L82 46 L88 52 L98 59 L110 64 L124 66 L134 64 V0Z" fill="#fff" filter="url(#texd)" opacity="0.700"/>
  </g></g>
</svg>

<svg class="th" style="left:278px;top:467.500px" width="28.500" height="40" viewBox="0 0 29 41">
<rect width="29" height="41" fill="#d9ccb8"/><g filter="url(#fb)"><rect x="18" width="11" height="16" fill="#e8dcc8"/><path d="M0 30 L10 26 L18 32 L29 28 V41 H0Z" fill="#4d6a3a"/><ellipse cx="15" cy="22" rx="13" ry="11" fill="#b79cc8"/><circle cx="16" cy="20" r="7" fill="#9a7eb4"/><circle cx="16" cy="20" r="3" fill="#c9b4d8"/><path d="M3 28 Q14 37 27 28" stroke="#d6c4e0" stroke-width="2.500" fill="none"/><path d="M0 34 L8 30 L12 41 H0Z" fill="#e4dccc"/></g></svg>
<div class="abs" style="left:279.500px;top:469px;width:15.500px;height:12px;background:#f0f0f0;border:1px solid #333"></div>
<div class="t" style="left:285.70px;top:471px;font-size:8.6px;color:#555;font-weight:bold;">2</div>

<svg class="abs" style="left:277.7px;top:510.500px" width="24" height="4"><path d="M1.5 0.200 L1.95 1.500 L3.1 1.500 L2.2 2.300 L2.55 3.700 L1.5 2.900 L0.45 3.700 L0.8 2.300 L-0.1 1.500 L1.05 1.500Z" fill="#f0f0f0"/><path d="M6.25 0.200 L6.7 1.500 L7.85 1.500 L6.95 2.300 L7.3 3.700 L6.25 2.900 L5.2 3.700 L5.55 2.300 L4.65 1.500 L5.8 1.500Z" fill="#f0f0f0"/><path d="M11 0.200 L11.45 1.500 L12.6 1.500 L11.7 2.300 L12.05 3.700 L11 2.900 L9.95 3.700 L10.3 2.300 L9.4 1.500 L10.55 1.500Z" fill="#f0f0f0"/><path d="M15.75 0.200 L16.2 1.500 L17.35 1.500 L16.45 2.300 L16.8 3.700 L15.75 2.900 L14.7 3.700 L15.05 2.300 L14.15 1.500 L15.3 1.500Z" fill="#f0f0f0"/><path d="M20.5 0.200 L20.95 1.500 L22.1 1.500 L21.2 2.300 L21.55 3.700 L20.5 2.900 L19.45 3.700 L19.8 2.300 L18.9 1.500 L20.05 1.500Z" fill="#f0f0f0"/></svg>

<svg class="th" style="left:329px;top:467.500px" width="28.500" height="40" viewBox="0 0 29 41">
<rect width="29" height="41" fill="#d4c8b4"/><g filter="url(#fb)"><rect x="0" width="29" height="8" fill="#dcd0c0"/><path d="M0 30 L10 27 L18 32 L29 29 V41 H0Z" fill="#4d6a3a"/><ellipse cx="14" cy="18" rx="13.500" ry="12" fill="#b9a2d0"/><circle cx="15" cy="16" r="7.500" fill="#9c84bc"/><circle cx="15" cy="16" r="3.200" fill="#cdbadc"/><path d="M1 24 Q14 35 28 24" stroke="#d9c9e4" stroke-width="2.500" fill="none"/><path d="M0 36 L6 32 L10 41 H0Z" fill="#e0d6c6"/></g></svg>
<div class="bdg" style="left:346.500px;top:496px;width:10.500px;height:10.500px"><svg width="10" height="10" style="position:absolute;left:0;top:0"><path d="M2 7.500 L8 2" stroke="#fff" stroke-width="1"/><rect x="1.500" y="1.500" width="3" height="2.500" fill="#ccc"/><rect x="5" y="6" width="3" height="2" fill="#ccc"/></svg></div>

<svg class="abs" style="left:328.5px;top:510.500px" width="24" height="4"><path d="M1.5 0.200 L1.95 1.500 L3.1 1.500 L2.2 2.300 L2.55 3.700 L1.5 2.900 L0.45 3.700 L0.8 2.300 L-0.1 1.500 L1.05 1.500Z" fill="#f0f0f0"/><path d="M6.25 0.200 L6.7 1.500 L7.85 1.500 L6.95 2.300 L7.3 3.700 L6.25 2.900 L5.2 3.700 L5.55 2.300 L4.65 1.500 L5.8 1.500Z" fill="#f0f0f0"/><path d="M11 0.200 L11.45 1.500 L12.6 1.500 L11.7 2.300 L12.05 3.700 L11 2.900 L9.95 3.700 L10.3 2.300 L9.4 1.500 L10.55 1.500Z" fill="#f0f0f0"/><path d="M15.75 0.200 L16.2 1.500 L17.35 1.500 L16.45 2.300 L16.8 3.700 L15.75 2.900 L14.7 3.700 L15.05 2.300 L14.15 1.500 L15.3 1.500Z" fill="#f0f0f0"/><path d="M20.5 0.200 L20.95 1.500 L22.1 1.500 L21.2 2.300 L21.55 3.700 L20.5 2.900 L19.45 3.700 L19.8 2.300 L18.9 1.500 L20.05 1.500Z" fill="#f0f0f0"/></svg>

<svg class="th" style="left:379px;top:467.500px;border-color:#d8d8d8" width="31" height="40" viewBox="0 0 31 41">
<rect width="31" height="41" fill="#050505"/><g filter="url(#fb)"><path d="M1 0 H15 Q17 14 2 25 Q1 10 1 0Z" fill="#9a7c98"/><path d="M1 0 H11 Q12 9 2 16Z" fill="#b498b0"/></g></svg>
<div class="abs" style="left:436.500px;top:527px;width:0;height:0;border-left:4.500px solid transparent;border-right:4.500px solid transparent;border-top:5px solid #8e8e8e"></div>
<div class="abs" style="left:872px;top:527px;width:0;height:0;border-left:8px solid transparent;border-bottom:7px solid #8a8a8a"></div>
<style>
.pop{position:absolute;background:#fff;border:0.500px solid #cdcdcd;border-radius:3px;box-shadow:0 0.500px 0.800px rgba(0,0,0,.18)}
.st{position:absolute;width:10.500px;border-radius:0 3px 3px 0;background:linear-gradient(#62aaff,#1a6cf4)}
.ma{position:absolute;left:293px;width:0;height:0;border-top:3.700px solid transparent;border-bottom:3.700px solid transparent;border-left:6.600px solid #262626}
.ms{position:absolute;left:177px;width:131px;height:1px;background:#dcdcdc}
.pm{position:absolute;width:14px;height:13px;background:linear-gradient(#fff,#f6f6f6);border:1px solid #cacaca}
</style>
<div class="abs" style="left:163px;top:38px;width:553.500px;height:379.500px;background:#ececec;border-radius:5px 5px 4px 4px;box-shadow:0 6px 18px rgba(0,0,0,.55),0 0 0 0.500px rgba(0,0,0,.5)"></div>
<div class="abs" style="left:163px;top:38px;width:553.500px;height:15px;background:linear-gradient(#ebebeb,#d5d5d5);border-radius:5px 5px 0 0;border-bottom:1px solid #bdbdbd;border-top:1px solid #f6f6f6"></div>
<div class="abs" style="left:167.6px;top:41.200px;width:8.800px;height:8.800px;border-radius:50%;background:#dadada;border:0.500px solid #c6c6c6"></div>
<div class="abs" style="left:181.3px;top:41.200px;width:8.800px;height:8.800px;border-radius:50%;background:#dadada;border:0.500px solid #c6c6c6"></div>
<div class="abs" style="left:195.1px;top:41.200px;width:8.800px;height:8.800px;border-radius:50%;background:#2bc840;border:0.500px solid #22ad35"></div>
<div class="t" style="left:389.70px;top:41px;font-size:9.5px;color:#4a4a4a;transform:scaleX(0.9870);transform-origin:0 0;">Create Smart Collection</div>
<div class="t" style="left:178.12px;top:70px;font-size:9.5px;color:#222;transform:scaleX(0.9846);transform-origin:0 0;">Name:</div>
<div class="abs" style="left:208.300px;top:67px;width:494px;height:14.500px;background:#fff;border:1px solid #d0d0d0;border-top-color:#c2c2c2"></div>
<div class="t" style="left:211.20px;top:70px;font-size:9.5px;color:#222;transform:scaleX(1.0044);transform-origin:0 0;">Smart Collection</div>
<div class="t" style="left:183.10px;top:89px;font-size:8.4px;color:#2a2a2a;">Location</div>
<div class="abs" style="left:176.200px;top:97px;width:526px;height:39px;background:#e2e2e2;border-radius:3px;box-shadow:inset 0 0 0 0.500px #d8d8d8"></div>
<div class="abs" style="left:190.400px;top:104.700px;width:8px;height:8px;background:#fff;border:0.500px solid #a8a8a8;border-radius:1.500px;box-shadow:0 0.500px 0.500px rgba(0,0,0,.2)"></div>
<div class="t" style="left:201.73px;top:105px;font-size:8.4px;color:#222;transform:scaleX(0.9671);transform-origin:0 0;">Inside a Collection Set</div>
<div class="pop" style="left:204.700px;top:116.800px;width:343.500px;height:12px;background:#f3f3f3;border-color:#d4d4d4;box-shadow:none"></div>
<svg class="abs" style="left:540px;top:118.500px" width="6" height="9"><path d="M1 3.500 L3 1.200 L5 3.500 M1 5.500 L3 7.800 L5 5.500" stroke="#909090" fill="none" stroke-width="0.900"/></svg>
<div class="t" style="left:176.48px;top:152px;font-size:9.5px;color:#222;transform:scaleX(1.0208);transform-origin:0 0;">Match</div>
<div class="pop" style="left:207.200px;top:151px;width:40.400px;height:12px"></div><div class="st" style="left:237.300px;top:151px;height:12.500px"></div>
<svg class="abs" style="left:237.300px;top:151px" width="10.500" height="12.500"><path d="M3.200 5 L5.250 2.800 L7.300 5 M3.200 7.500 L5.250 9.700 L7.300 7.500" stroke="#fff" fill="none" stroke-width="1.100"/></svg>
<div class="t" style="left:213.00px;top:154px;font-size:8.2px;color:#4a4a4a;transform:scaleX(0.8875);transform-origin:0 0;">all</div>
<div class="t" style="left:253.60px;top:152px;font-size:9.5px;color:#222;">of the following rules:</div>
<div class="abs" style="left:176.200px;top:169.500px;width:526px;height:206.500px;background:#fff;border:1px solid #c6c6c6;border-top-color:#b8b8b8"></div>
<div class="abs" style="left:691px;top:170.500px;width:10.200px;height:204.500px;background:#f8f8f8;border-left:1px solid #e2e2e2"></div>
<div class="abs" style="left:177px;top:191.500px;width:514px;height:1px;background:#e0e0e0"></div>
<div class="abs" style="left:177px;top:214px;width:514px;height:1px;background:#e0e0e0"></div>
<div class="pop" style="left:318.400px;top:174.4px;width:129.600px;height:12px"></div><div class="st" style="left:437.700px;top:174.4px;height:12.500px"></div>
<svg class="abs" style="left:437.700px;top:174.4px" width="10.500" height="12.500"><path d="M3.200 5 L5.250 2.800 L7.300 5 M3.200 7.500 L5.250 9.700 L7.300 7.500" stroke="#fff" fill="none" stroke-width="1.100"/></svg>
<div class="abs" style="left:455px;top:179.8px;width:1.800px;height:1.800px;background:#484848"></div>
<div class="abs" style="left:465.4px;top:179.8px;width:1.800px;height:1.800px;background:#484848"></div>
<div class="abs" style="left:475.7px;top:179.8px;width:1.800px;height:1.800px;background:#484848"></div>
<div class="abs" style="left:486.1px;top:179.8px;width:1.800px;height:1.800px;background:#484848"></div>
<div class="abs" style="left:496.4px;top:179.8px;width:1.800px;height:1.800px;background:#484848"></div>
<div class="pm" style="left:657.300px;top:174.4px"></div><div class="pm" style="left:670.300px;top:174.4px"></div>
<div class="abs" style="left:662.500px;top:180.6px;width:3.200px;height:1px;background:#606060"></div>
<div class="abs" style="left:675.300px;top:180.6px;width:4.400px;height:1px;background:#606060"></div><div class="abs" style="left:677px;top:178.9px;width:1px;height:4.400px;background:#606060"></div>
<div class="pop" style="left:318.400px;top:197.3px;width:129.600px;height:12px"></div><div class="st" style="left:437.700px;top:197.3px;height:12.500px"></div>
<svg class="abs" style="left:437.700px;top:197.3px" width="10.500" height="12.500"><path d="M3.200 5 L5.250 2.800 L7.300 5 M3.200 7.500 L5.250 9.700 L7.300 7.500" stroke="#fff" fill="none" stroke-width="1.100"/></svg>
<div class="abs" style="left:455px;top:202.7px;width:1.800px;height:1.800px;background:#484848"></div>
<div class="abs" style="left:465.4px;top:202.7px;width:1.800px;height:1.800px;background:#484848"></div>
<div class="abs" style="left:475.7px;top:202.7px;width:1.800px;height:1.800px;background:#484848"></div>
<div class="abs" style="left:486.1px;top:202.7px;width:1.800px;height:1.800px;background:#484848"></div>
<div class="abs" style="left:496.4px;top:202.7px;width:1.800px;height:1.800px;background:#484848"></div>
<div class="pm" style="left:657.300px;top:197.3px"></div><div class="pm" style="left:670.300px;top:197.3px"></div>
<div class="abs" style="left:662.500px;top:203.5px;width:3.200px;height:1px;background:#606060"></div>
<div class="abs" style="left:675.300px;top:203.5px;width:4.400px;height:1px;background:#606060"></div><div class="abs" style="left:677px;top:201.8px;width:1px;height:4.400px;background:#606060"></div>
<div class="t" style="left:324.60px;top:178px;font-size:8.2px;color:#333;transform:scaleX(0.8500);transform-origin:0 0;">is</div>
<div class="t" style="left:324.60px;top:201px;font-size:8.2px;color:#333;transform:scaleX(0.9925);transform-origin:0 0;">is greater than or equal to</div>
<div class="pop" style="left:585.700px;top:390.500px;width:54.700px;height:13.500px;border-radius:3.500px"></div>
<div class="t" style="left:599.10px;top:393px;font-size:9.4px;color:#222;transform:scaleX(0.9621);transform-origin:0 0;">Cancel</div>
<div class="abs" style="left:647.400px;top:390.500px;width:54.800px;height:13.800px;border-radius:3.500px;background:linear-gradient(#5eacff,#1a70f6);box-shadow:0 0.500px 1px rgba(0,0,0,.3)"></div>
<div class="t" style="left:661.70px;top:393px;font-size:9.4px;color:#fff;transform:scaleX(0.9464);transform-origin:0 0;">Create</div>
<div class="abs" style="left:177px;top:170px;width:131px;height:224.500px;background:#f1f1f1;border-radius:0 0 5px 5px;box-shadow:0 4px 9px rgba(0,0,0,.32),0 0 0 0.500px rgba(0,0,0,.22)"></div>
<div class="abs" style="left:177px;top:174.600px;width:131px;height:10.400px;background:#3d8df7"></div>
<svg class="abs" style="left:180px;top:176px" width="8" height="8"><path d="M0.800 4.300 L2.800 6.800 L6.600 1" stroke="#fff" stroke-width="1.300" fill="none"/></svg>
<div class="t" style="left:191.10px;top:177px;font-size:8.2px;color:#fff;transform:scaleX(1.0182);transform-origin:0 0;">Rating</div>
<div class="t" style="left:191.10px;top:188px;font-size:8.2px;color:#404040;transform:scaleX(0.9938);transform-origin:0 0;">Pick Flag</div>
<div class="t" style="left:191.10px;top:199px;font-size:8.2px;color:#404040;transform:scaleX(0.9829);transform-origin:0 0;">Label Color</div>
<div class="t" style="left:191.10px;top:210px;font-size:8.2px;color:#404040;transform:scaleX(1.0083);transform-origin:0 0;">Label Text</div>
<div class="t" style="left:191.10px;top:221px;font-size:8.2px;color:#404040;transform:scaleX(0.9797);transform-origin:0 0;">Has Smart Preview</div>
<div class="t" style="left:191.10px;top:232px;font-size:8.2px;color:#404040;transform:scaleX(0.9691);transform-origin:0 0;">Has Snapshots</div>
<div class="t" style="left:191.10px;top:251px;font-size:8.2px;color:#404040;transform:scaleX(0.9840);transform-origin:0 0;">Source</div>
<div class="ma" style="top:250.8px"></div>
<div class="t" style="left:191.10px;top:262px;font-size:8.2px;color:#404040;transform:scaleX(0.9770);transform-origin:0 0;">File Name / Type</div>
<div class="ma" style="top:261.8px"></div>
<div class="t" style="left:191.10px;top:281px;font-size:8.2px;color:#404040;">Date</div>
<div class="ma" style="top:281.2px"></div>
<div class="t" style="left:191.10px;top:292px;font-size:8.2px;color:#404040;transform:scaleX(0.9578);transform-origin:0 0;">Camera Info</div>
<div class="ma" style="top:292.3px"></div>
<div class="t" style="left:191.10px;top:304px;font-size:8.2px;color:#404040;transform:scaleX(1.0100);transform-origin:0 0;">Location</div>
<div class="ma" style="top:303.4px"></div>
<div class="t" style="left:191.10px;top:315px;font-size:8.2px;color:#404040;transform:scaleX(0.9842);transform-origin:0 0;">Other Metadata</div>
<div class="ma" style="top:314.5px"></div>
<div class="t" style="left:191.10px;top:334px;font-size:8.2px;color:#404040;transform:scaleX(0.9931);transform-origin:0 0;">Develop</div>
<div class="ma" style="top:333.6px"></div>
<div class="t" style="left:191.10px;top:353px;font-size:8.2px;color:#404040;transform:scaleX(0.9533);transform-origin:0 0;">Size</div>
<div class="ma" style="top:352.8px"></div>
<div class="t" style="left:191.10px;top:364px;font-size:8.2px;color:#404040;transform:scaleX(0.9789);transform-origin:0 0;">Color</div>
<div class="ma" style="top:363.8px"></div>
<div class="t" style="left:191.10px;top:383px;font-size:8.2px;color:#404040;transform:scaleX(0.9693);transform-origin:0 0;">Any Searchable Text</div>
<div class="ms" style="top:244.2px"></div>
<div class="ms" style="top:275px"></div>
<div class="ms" style="top:327px"></div>
<div class="ms" style="top:346.4px"></div>
<div class="ms" style="top:376.4px"></div>
</body></html>
